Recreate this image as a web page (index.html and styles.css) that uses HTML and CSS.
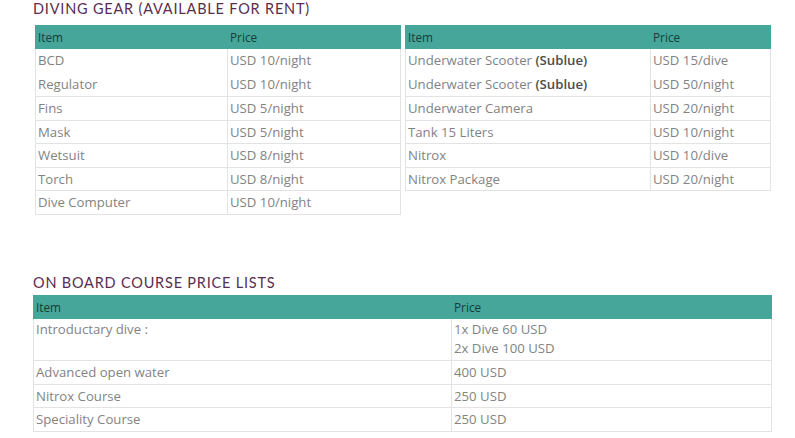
FILE: index.html
```html
<!DOCTYPE html>
<html>
<head>
<meta charset="utf-8">
<link rel="stylesheet" href="styles.css">
</head>
<body>
<div class="page">
  <h2 class="title t1">Diving Gear (Available for Rent)</h2>
  <div class="pair">
    <table class="grid g1">
      <colgroup><col class="c1a"><col></colgroup>
      <tr class="head"><th>Item</th><th>Price</th></tr>
      <tr class="dbl"><td>BCD<br>Regulator</td><td>USD 10/night<br>USD 10/night</td></tr>
      <tr><td>Fins</td><td>USD 5/night</td></tr>
      <tr><td>Mask</td><td>USD 5/night</td></tr>
      <tr><td>Wetsuit</td><td>USD 8/night</td></tr>
      <tr><td>Torch</td><td>USD 8/night</td></tr>
      <tr><td>Dive Computer</td><td>USD 10/night</td></tr>
    </table>
    <table class="grid g2">
      <colgroup><col class="c2a"><col></colgroup>
      <tr class="head"><th>Item</th><th>Price</th></tr>
      <tr class="dbl"><td>Underwater Scooter <b>(Sublue)</b><br>Underwater Scooter <b>(Sublue)</b></td><td>USD 15/dive<br>USD 50/night</td></tr>
      <tr><td>Underwater Camera</td><td>USD 20/night</td></tr>
      <tr><td>Tank 15 Liters</td><td>USD 10/night</td></tr>
      <tr><td>Nitrox</td><td>USD 10/dive</td></tr>
      <tr><td>Nitrox Package</td><td>USD 20/night</td></tr>
    </table>
  </div>
  <h2 class="title t2">On Board Course Price Lists</h2>
  <table class="grid g3">
    <colgroup><col class="c3a"><col></colgroup>
    <tr class="head"><th>Item</th><th>Price</th></tr>
    <tr class="intro"><td>Introductary dive :</td><td>1x Dive 60 USD<br>2x Dive 100 USD</td></tr>
    <tr><td>Advanced open water</td><td>400 USD</td></tr>
    <tr><td>Nitrox Course</td><td>250 USD</td></tr>
    <tr><td>Speciality Course</td><td>250 USD</td></tr>
  </table>
</div>
</body>
</html>
```

FILE: styles.css
```css
html, body {
  margin: 0;
  padding: 0;
  background: #ffffff;
}
.page {
  padding-left: 33px;
  font-family: "Open Sans", "Noto Sans", sans-serif;
}
.title {
  margin: 0;
  font-family: "Lato", sans-serif;
  font-weight: 400;
  text-transform: uppercase;
  color: #5a2d50;
  font-size: 14.5px;
  letter-spacing: 0.8px;
  line-height: 18px;
}
.t1 {
  padding-top: 0;
  height: 25px;
}
.t2 {
  margin-top: 59px;
  height: 21px;
}
.pair {
  display: flex;
  gap: 4px;
  padding-left: 2px;
  align-items: flex-start;
}
.grid {
  border-collapse: collapse;
  table-layout: fixed;
  font-size: 13.2px;
  color: #838383;
}
.g1, .g2 { width: 366px; }
.g3 { width: 739px; }
.c1a { width: 192px; }
.c2a { width: 245px; }
.c3a { width: 418px; }
.grid th, .grid td {
  text-align: left;
  vertical-align: top;
  padding: 0 2px;
  border: 1px solid #e3e3e3;
  line-height: 22.6px;
  font-weight: 400;
}
.grid .dbl td { line-height: 23.5px; }
.grid .head th {
  background: #46a699;
  color: #143e38;
  font-size: 11.8px;
  line-height: 22px;
  border-color: #46a699;
  border-left-color: #7cc4ba;
}
.grid .head th:first-child { border-left-color: #46a699; }
.grid b { font-weight: 600; color: #4d4d4d; }
.grid .intro td { line-height: 19.5px; padding-top: 1px; padding-bottom: 1px; }
```
